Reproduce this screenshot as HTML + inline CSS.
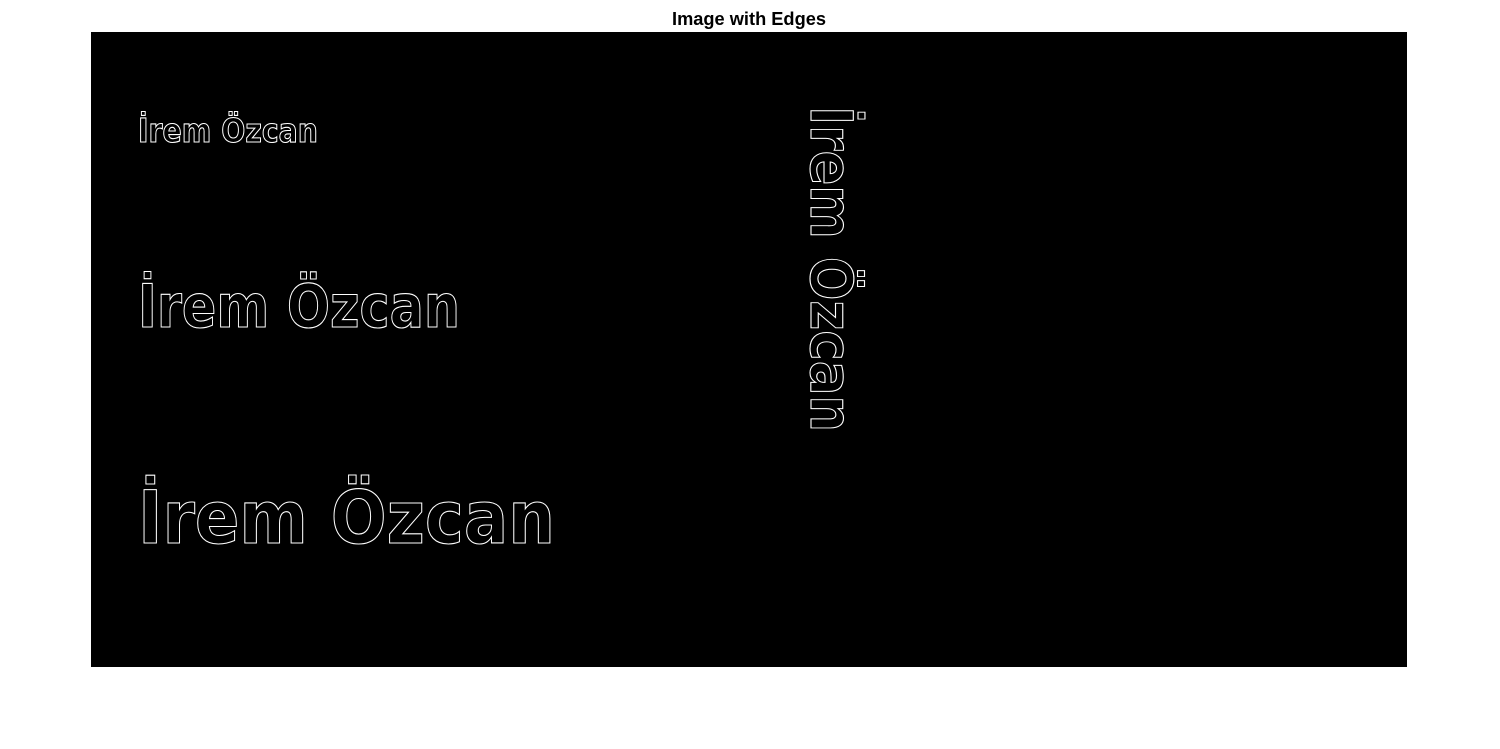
<!DOCTYPE html>
<html><head><style>
html,body{margin:0;padding:0;background:#fff;width:1500px;height:749px;overflow:hidden}
</style></head><body>
<svg width="1500" height="749" xmlns="http://www.w3.org/2000/svg">
<text x="749" y="25" text-anchor="middle" font-family="Liberation Sans, sans-serif" font-weight="bold" font-size="18" fill="#000" textLength="154" lengthAdjust="spacingAndGlyphs">Image with Edges</text>
<rect x="91" y="32" width="1316" height="635" fill="#000"/>
<g fill="none" stroke="#fff" stroke-width="1.1" font-family="DejaVu Sans, sans-serif" font-weight="bold">
<text x="138" y="142" font-size="33" textLength="180" lengthAdjust="spacingAndGlyphs">İrem Özcan</text>
<text x="138" y="327" font-size="60" textLength="322" lengthAdjust="spacingAndGlyphs">İrem Özcan</text>
<text x="138" y="543" font-size="73" textLength="417" lengthAdjust="spacingAndGlyphs">İrem Özcan</text>
<text transform="translate(811,106) rotate(90)" x="0" y="0" font-size="58" textLength="326" lengthAdjust="spacingAndGlyphs">İrem Özcan</text>
</g>
</svg>
</body></html>
